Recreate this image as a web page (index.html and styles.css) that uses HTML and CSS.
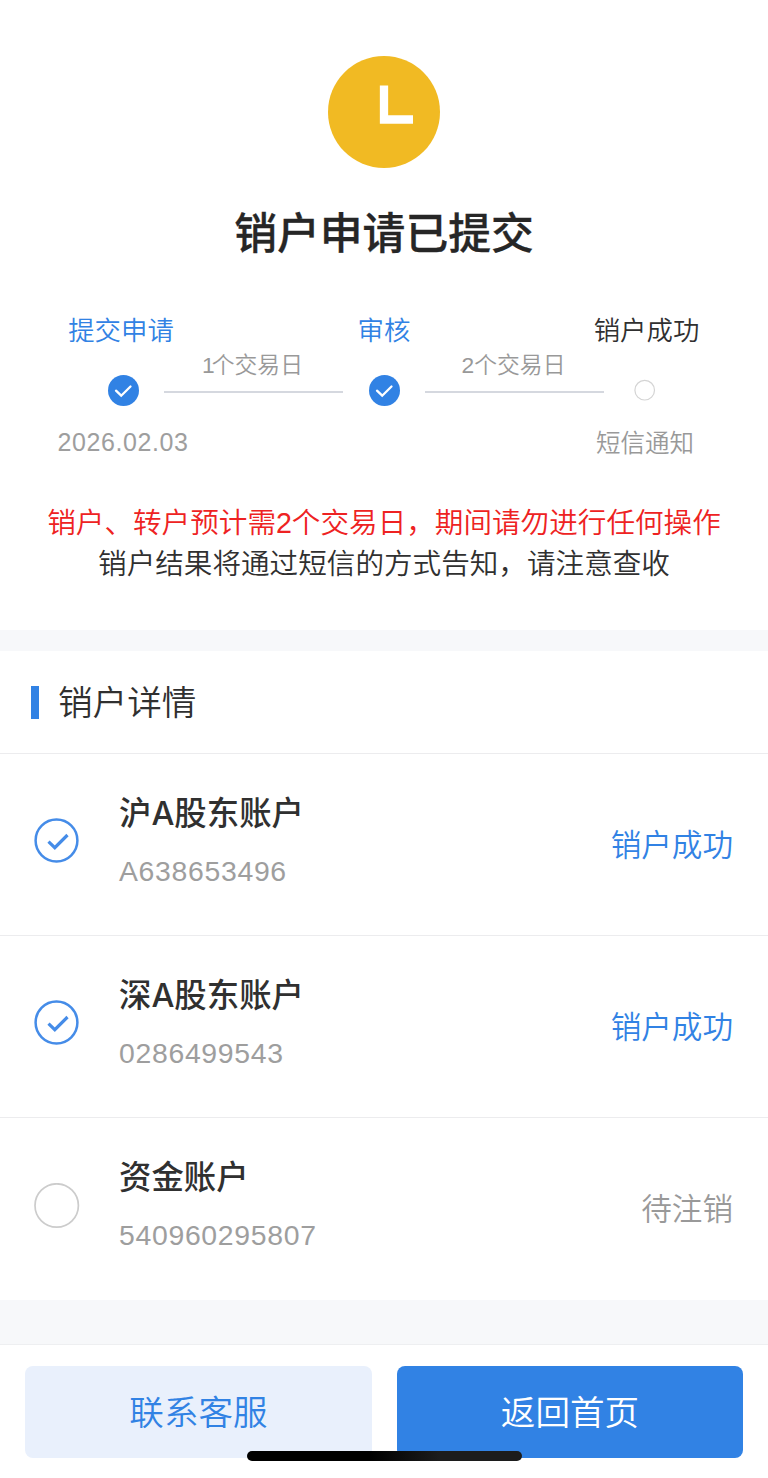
FILE: index.html
```html
<!DOCTYPE html>
<html lang="zh-CN">
<head>
<meta charset="utf-8">
<title>销户申请</title>
<link rel="stylesheet" href="styles.css">
</head>
<body>
<main class="page">
  <section class="hero">
    <svg class="clock" viewBox="0 0 112 112"><circle cx="56" cy="56" r="56" fill="#f1ba23"/><path d="M56 29.500V63.500H85" fill="none" stroke="#fff" stroke-width="8.300"/></svg>
    <h1 class="title">销户申请已提交</h1>
    <div class="steps">
      <div class="step step-first">
        <span class="step-label blue">提交申请</span>
        <svg class="dot" viewBox="0 0 31 31"><circle cx="15.500" cy="15.500" r="15.500" fill="#3182e4"/><path d="M8 15.700l5.200 5L22.500 11.500" fill="none" stroke="#fff" stroke-width="2.300" stroke-linecap="round"/></svg>
        <span class="step-note num">2026.02.03</span>
      </div>
      <div class="interval"><span class="one">1</span>个交易日</div>
      <div class="step">
        <span class="step-label blue">审核</span>
        <svg class="dot" viewBox="0 0 31 31"><circle cx="15.500" cy="15.500" r="15.500" fill="#3182e4"/><path d="M8 15.700l5.200 5L22.500 11.500" fill="none" stroke="#fff" stroke-width="2.300" stroke-linecap="round"/></svg>
      </div>
      <div class="interval">2个交易日</div>
      <div class="step step-last">
        <span class="step-label">销户成功</span>
        <svg class="dot" viewBox="0 0 31 31"><circle cx="14.700" cy="15.200" r="9.800" fill="#fff" stroke="#d4d4d4" stroke-width="1.200"/></svg>
        <span class="step-note">短信通知</span>
      </div>
    </div>
    <p class="tip tip-red">销户、转户预计需2个交易日，期间请勿进行任何操作</p>
    <p class="tip">销户结果将通过短信的方式告知，请注意查收</p>
  </section>

  <section class="details">
    <h2 class="heading"><span class="bar"></span><span class="heading-text">销户详情</span></h2>
    <div class="row">
      <svg class="mark" viewBox="0 0 46 46"><circle cx="22.500" cy="22.500" r="20.900" fill="none" stroke="#458ce8" stroke-width="2.500"/><path d="M14.500 23.700l6.300 6L33.500 17" fill="none" stroke="#458ce8" stroke-width="3.200"/></svg>
      <div class="info"><h3 class="name">沪A股东账户</h3><span class="code num">A638653496</span></div>
      <span class="status blue">销户成功</span>
    </div>
    <div class="row">
      <svg class="mark" viewBox="0 0 46 46"><circle cx="22.500" cy="22.500" r="20.900" fill="none" stroke="#458ce8" stroke-width="2.500"/><path d="M14.500 23.700l6.300 6L33.500 17" fill="none" stroke="#458ce8" stroke-width="3.200"/></svg>
      <div class="info"><h3 class="name">深A股东账户</h3><span class="code num">0286499543</span></div>
      <span class="status blue">销户成功</span>
    </div>
    <div class="row">
      <svg class="mark" viewBox="0 0 46 46"><circle cx="22.700" cy="22.500" r="21.700" fill="none" stroke="#ccc" stroke-width="1.700"/></svg>
      <div class="info"><h3 class="name">资金账户</h3><span class="code num">540960295807</span></div>
      <span class="status">待注销</span>
    </div>
  </section>

  <footer class="actions">
    <button class="btn btn-light">联系客服</button>
    <button class="btn btn-main">返回首页</button>
    <span class="home-bar"></span>
  </footer>
</main>
</body>
</html>
```

FILE: styles.css
```css
* { box-sizing: border-box; margin: 0; }
body {
  background: #f7f8fa;
  color: #303030;
  font-family: "Liberation Sans", "Noto Sans CJK SC", sans-serif;
  font-weight: 350;
}
.page { width: 768px; height: 1478px; display: flex; flex-direction: column; overflow: hidden; }
.blue { color: #3182e4; }
.num { font-family: "Liberation Sans", sans-serif; }
.hero {
  height: 630px;
  padding-top: 56px;
  background: #fff;
  display: flex;
  flex-direction: column;
  align-items: center;
}
.clock { width: 112px; height: 112px; flex: none; }
.title {
  margin-top: 32px;
  font-size: 42.8px;
  font-weight: 500;
  line-height: 60px;
  color: #262626;
  font-family: "Noto Sans CJK SC", sans-serif;
  -webkit-text-stroke: 0.3px #262626;
}
.steps {
  margin-top: 50px;
  width: 604px;
  height: 154px;
  display: grid;
  grid-template-columns: 82px 179px 82px 179px 82px;
}
.step { display: flex; flex-direction: column; align-items: center; white-space: nowrap; }
.step-label { margin-top: 1px; font-size: 26.4px; line-height: 40px; }
.step-first .step-label { padding-right: 4px; }
.step-last .step-label { padding-left: 3px; }
.dot { width: 31px; height: 31px; margin-top: 24px; flex: none; }
.step-note { margin-top: 18px; font-size: 24.5px; line-height: 40px; color: #999; }
.step-note.num { margin-top: 16px; font-size: 25px; letter-spacing: 0.6px; color: #9e9e9e; }
.interval {
  height: 83px;
  padding-top: 38px;
  padding-right: 2px;
  border-bottom: 2px solid #d5d8df;
  text-align: center;
  font-size: 22.8px;
  line-height: 34px;
  color: #999;
}
.one { letter-spacing: -3px; }
.tip { font-size: 28.6px; line-height: 41px; white-space: nowrap; }
.tip-red { margin-top: 39px; color: #ee2222; }
.details { margin-top: 21px; background: #fff; }
.heading {
  height: 103px;
  padding-left: 31px;
  display: flex;
  align-items: center;
  gap: 19px;
  font-size: 34.6px;
  font-weight: 350;
  border-bottom: 1px solid #ececee;
}
.heading-text { padding-bottom: 4px; }
.bar { width: 8px; height: 33px; background: #3182e4; }
.row {
  height: 182px;
  padding: 0 34px;
  display: flex;
  align-items: center;
  border-bottom: 1px solid #ececee;
}
.row:last-child { border-bottom: 0; }
.mark { width: 46px; height: 46px; flex: none; margin-top: -7px; }
.info { margin-left: 39px; flex: 1; display: flex; flex-direction: column; }
.name { font-family: Inter, "Noto Sans CJK SC", sans-serif; font-size: 32.4px; font-weight: 500; line-height: 48px; }
.code { margin-top: 13px; margin-bottom: 9px; font-size: 28.4px; line-height: 40px; letter-spacing: 0.68px; color: #9e9e9e; }
.status { margin-right: 1px; font-size: 30.6px; line-height: 44px; color: #999; }
.status.blue { color: #3182e4; }
.actions {
  position: relative;
  margin-top: 44px;
  height: 134px;
  padding: 21px 25px 0;
  border-top: 1px solid #eeeff1;
  background: #fff;
  display: grid;
  grid-template-columns: 347px 346px;
  gap: 25px;
}
.btn { height: 92px; padding: 0 0 4px; border: 0; border-radius: 8px; font: 350 34.6px "Noto Sans CJK SC", sans-serif; }
.btn-light { background: #e9f0fc; color: #3182e4; }
.btn-main { background: #3182e4; color: #fff; }
.home-bar {
  position: absolute;
  left: 247px;
  top: 106px;
  width: 275px;
  height: 10px;
  border-radius: 5px;
  background: linear-gradient(90deg, #000 45%, #1c1c1c 70%);
}
```
